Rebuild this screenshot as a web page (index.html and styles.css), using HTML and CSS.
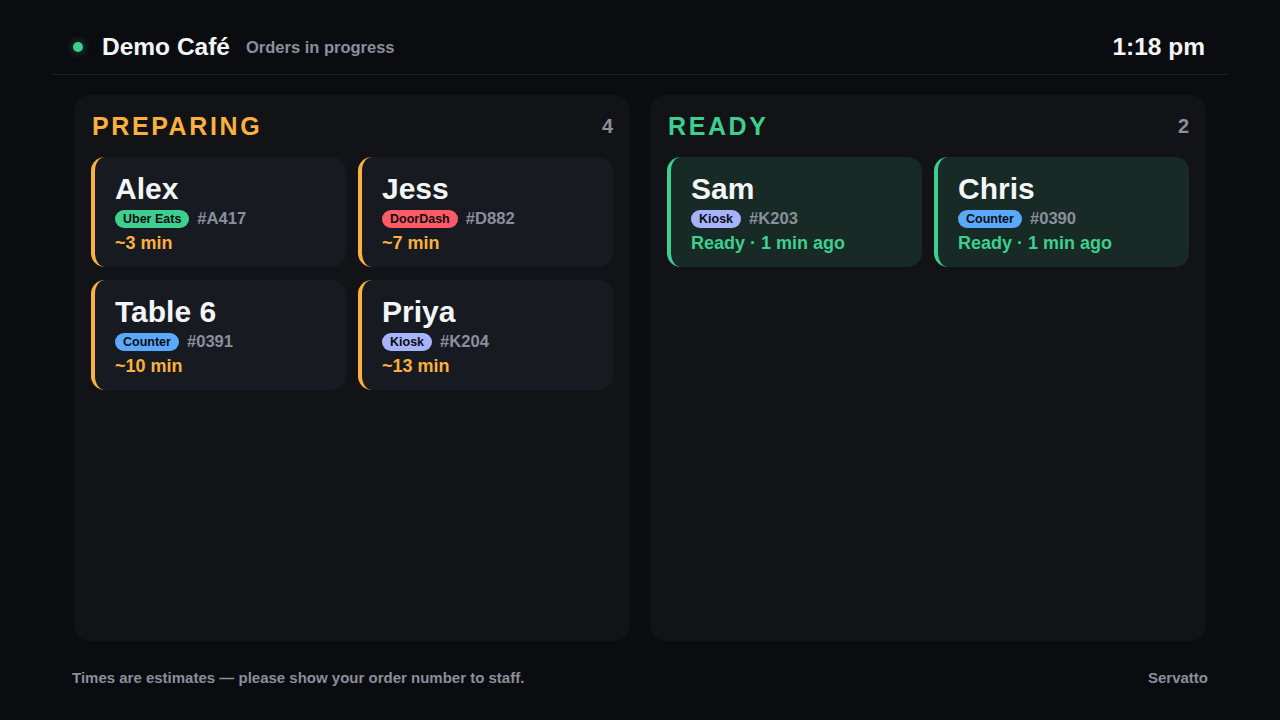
FILE: index.html
```html
<!DOCTYPE html>
<html>
<head>
    <title>Demo Café - Orders</title>
    <link rel="stylesheet" href="styles.css">
</head>
<body>

<div class="topbar">
    <div class="brand">
        <span class="live-dot"></span>
        <span class="venue">Demo Café</span>
        <span class="subtitle">Orders in progress</span>
    </div>
    <div class="clock">1:18 pm</div>
</div>

<div class="board">
    <div class="column">
        <div class="column-head">
            <h2 class="column-title preparing">PREPARING</h2>
            <span class="count">4</span>
        </div>
        <div class="cards">
            <div class="order preparing">
                <div class="name">Alex</div>
                <div class="meta"><span class="tag uber">Uber Eats</span><span class="ref">#A417</span></div>
                <div class="status">~3 min</div>
            </div>
            <div class="order preparing">
                <div class="name">Jess</div>
                <div class="meta"><span class="tag doordash">DoorDash</span><span class="ref">#D882</span></div>
                <div class="status">~7 min</div>
            </div>
            <div class="order preparing">
                <div class="name">Table 6</div>
                <div class="meta"><span class="tag counter">Counter</span><span class="ref">#0391</span></div>
                <div class="status">~10 min</div>
            </div>
            <div class="order preparing">
                <div class="name">Priya</div>
                <div class="meta"><span class="tag kiosk">Kiosk</span><span class="ref">#K204</span></div>
                <div class="status">~13 min</div>
            </div>
        </div>
    </div>

    <div class="column">
        <div class="column-head">
            <h2 class="column-title ready">READY</h2>
            <span class="count">2</span>
        </div>
        <div class="cards">
            <div class="order ready">
                <div class="name">Sam</div>
                <div class="meta"><span class="tag kiosk">Kiosk</span><span class="ref">#K203</span></div>
                <div class="status">Ready · 1 min ago</div>
            </div>
            <div class="order ready">
                <div class="name">Chris</div>
                <div class="meta"><span class="tag counter">Counter</span><span class="ref">#0390</span></div>
                <div class="status">Ready · 1 min ago</div>
            </div>
        </div>
    </div>
</div>

<div class="footer">
    <span>Times are estimates — please show your order number to staff.</span>
    <span>Servatto</span>
</div>

</body>
</html>
```

FILE: styles.css
```css
body {
    font-family: "Liberation Sans", Arial, sans-serif;
    font-weight: bold;
    background-color: #0b0c10;
    margin: 0;
    padding: 0;
    color: #f4f5f7;
    height: 720px;
    overflow: hidden;
}

.topbar {
    margin: 0 52px;
    padding: 33px 23px 13px 21px;
    border-bottom: 1px solid #1e2027;
    display: flex;
    align-items: center;
    justify-content: space-between;
}

.brand {
    display: flex;
    align-items: center;
}

.live-dot {
    width: 10px;
    height: 10px;
    border-radius: 50%;
    background-color: #3ecf8e;
    box-shadow: 0 0 8px rgba(62, 207, 142, 0.5);
    margin-right: 19px;
}

.venue {
    font-size: 24.5px;
    line-height: 28px;
}

.subtitle {
    font-size: 16.5px;
    color: #8a8f9c;
    margin-left: 16px;
}

.clock {
    font-size: 24.5px;
    line-height: 28px;
}

.board {
    display: grid;
    grid-template-columns: 1fr 1fr;
    gap: 20px;
    padding: 20px 74px 0;
}

.column {
    background-color: #121317;
    border-radius: 16px;
    height: 546px;
    padding: 14px 17px;
    box-sizing: border-box;
}

.column-head {
    display: flex;
    align-items: center;
    justify-content: space-between;
    padding: 0 0 0 1px;
    height: 34px;
    margin-bottom: 14px;
}

.column-title {
    margin: 0;
    font-size: 25px;
    letter-spacing: 2.6px;
}

.column-title.preparing {
    color: #fbb040;
}

.column-title.ready {
    color: #3ecf8e;
}

.count {
    font-size: 20px;
    color: #8a8f9c;
    margin-top: 1px;
}

.cards {
    display: grid;
    grid-template-columns: 1fr 1fr;
    gap: 13px 12px;
}

.order {
    border-radius: 14px;
    border-left: 4px solid;
    padding: 15px 20px 12px 20px;
    height: 110px;
    box-sizing: border-box;
}

.order.preparing {
    background-color: #181a21;
    border-left-color: #fbb040;
}

.order.ready {
    background-color: #182a25;
    border-left-color: #3ecf8e;
}

.name {
    font-size: 30px;
    line-height: 34px;
}

.meta {
    display: flex;
    align-items: center;
    margin-top: 2px;
    height: 22px;
}

.tag {
    font-size: 12.5px;
    line-height: 18px;
    padding: 0 8px;
    border-radius: 9px;
    color: #0b0c10;
    margin-right: 8px;
}

.tag.uber {
    background-color: #3ecf8e;
}

.tag.doordash {
    background-color: #ff5a66;
}

.tag.counter {
    background-color: #5aa9ff;
}

.tag.kiosk {
    background-color: #a5b4fc;
}

.ref {
    font-size: 16.6px;
    color: #8a8f9c;
}

.status {
    font-size: 18px;
    line-height: 24px;
    margin-top: 1px;
}

.order.preparing .status {
    color: #fbb040;
}

.order.ready .status {
    color: #3ecf8e;
}

.footer {
    display: flex;
    justify-content: space-between;
    padding: 28px 72px;
    font-size: 15px;
    line-height: 18px;
    color: #8a8f9c;
}
```
